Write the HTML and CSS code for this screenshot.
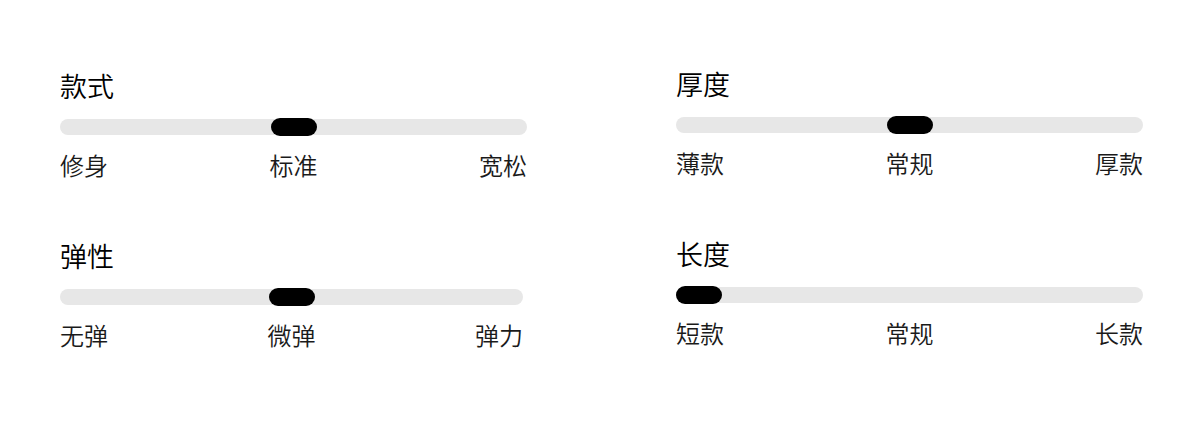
FILE: index.html
```html
<!DOCTYPE html>
<html lang="zh-CN">
<head>
    <meta charset="UTF-8">
    <meta name="viewport" content="width=device-width, initial-scale=1.0">
    <title>尺码感受</title>
    <link rel="stylesheet" href="styles.css">
</head>
<body>

<div class="fit-panel">

    <!-- 左列 -->
    <div class="column">
        <div class="slider">
            <div class="slider-title">款式</div>
            <div class="track">
                <span class="thumb" style="--pos: 0.5"></span>
            </div>
            <div class="labels">
                <span>修身</span>
                <span>标准</span>
                <span>宽松</span>
            </div>
        </div>

        <div class="slider narrow">
            <div class="slider-title">弹性</div>
            <div class="track">
                <span class="thumb" style="--pos: 0.5"></span>
            </div>
            <div class="labels">
                <span>无弹</span>
                <span>微弹</span>
                <span>弹力</span>
            </div>
        </div>
    </div>

    <!-- 右列 -->
    <div class="column raised">
        <div class="slider">
            <div class="slider-title">厚度</div>
            <div class="track">
                <span class="thumb" style="--pos: 0.5"></span>
            </div>
            <div class="labels">
                <span>薄款</span>
                <span>常规</span>
                <span>厚款</span>
            </div>
        </div>

        <div class="slider">
            <div class="slider-title">长度</div>
            <div class="track">
                <span class="thumb" style="--pos: 0"></span>
            </div>
            <div class="labels">
                <span>短款</span>
                <span>常规</span>
                <span>长款</span>
            </div>
        </div>
    </div>

</div>

</body>
</html>
```

FILE: styles.css
```css
body {
    margin: 0;
    padding: 0;
    background: #fff;
    font-family: "Noto Sans CJK SC", "Noto Sans", sans-serif;
    font-weight: 350;
    color: #000;
}

.fit-panel {
    display: flex;
    gap: 149px;
    padding: 68px 0 0 60px;
}

.column {
    display: flex;
    flex-direction: column;
    gap: 57px;
    width: 467px;
}

.column.raised {
    margin-top: -2px;
}

.slider-title {
    font-size: 27px;
    line-height: 36px;
    color: #000;
}

.track {
    position: relative;
    height: 16px;
    margin-top: 15px;
    border-radius: 8px;
    background: #e7e7e7;
}

.slider.narrow .track,
.slider.narrow .labels {
    width: 463px;
}

.thumb {
    position: absolute;
    top: -1px;
    left: calc((100% - 46px) * var(--pos));
    width: 46px;
    height: 18px;
    border-radius: 9px;
    background: #000;
}

.labels {
    display: flex;
    justify-content: space-between;
    margin-top: 14px;
    font-size: 24px;
    line-height: 32px;
    color: #1a1a1a;
}
```
